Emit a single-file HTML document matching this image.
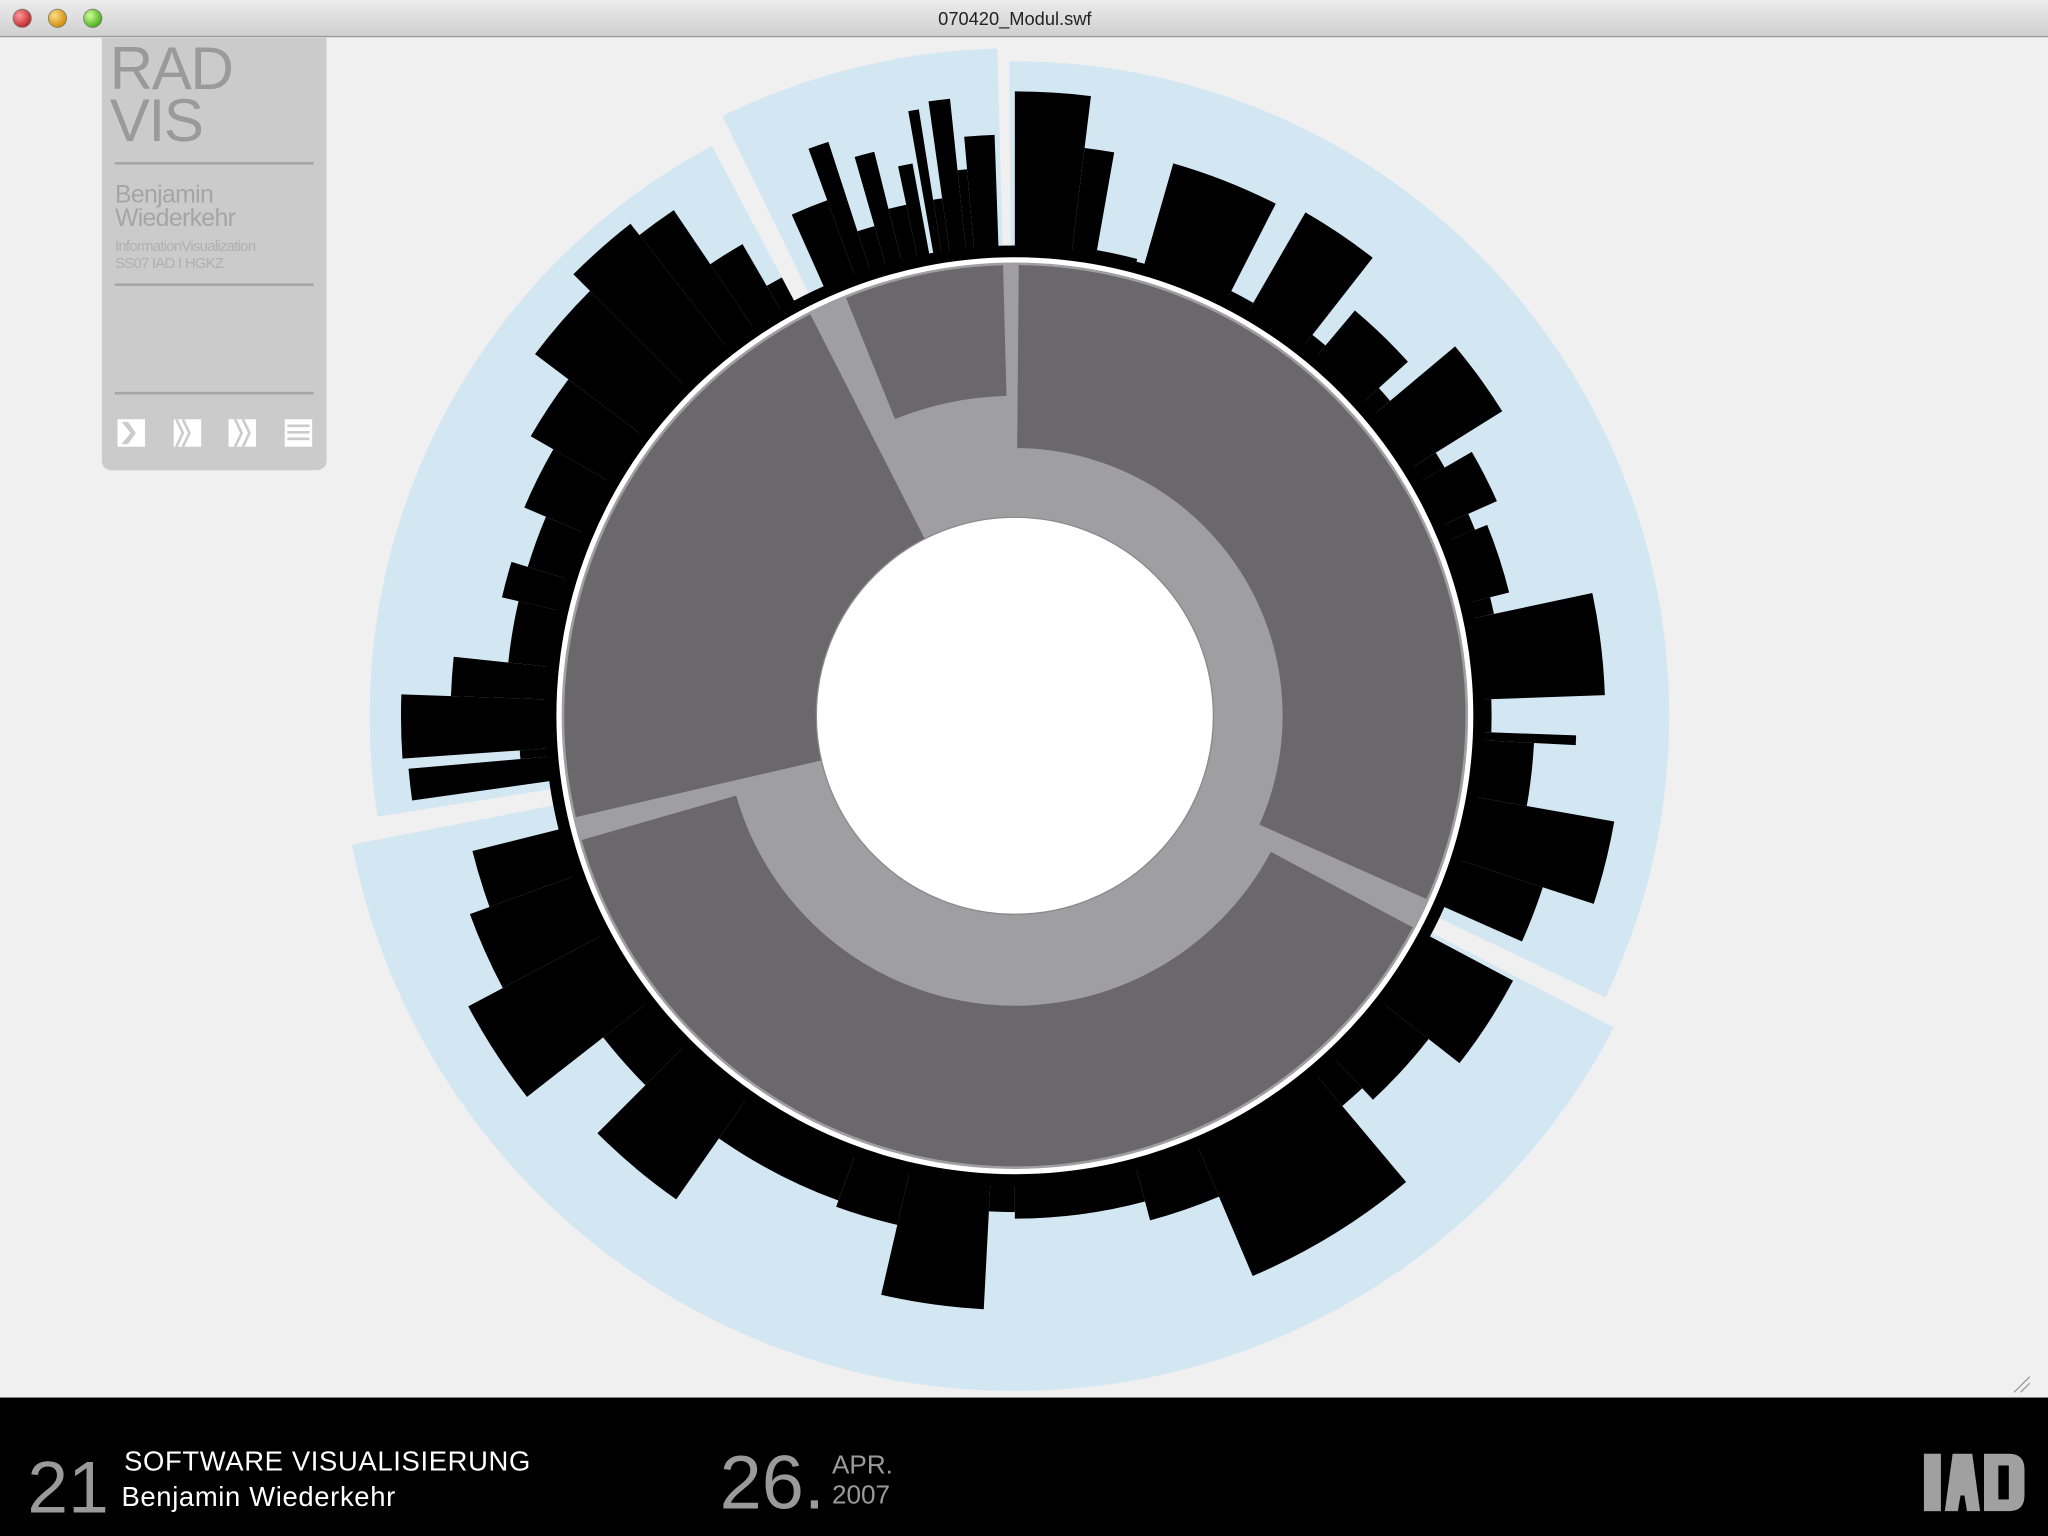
<!DOCTYPE html>
<html><head><meta charset="utf-8"><style>
html,body{margin:0;padding:0;background:#f0f0f0;overflow:hidden}
svg{display:block}
text{font-family:"Liberation Sans",sans-serif}
</style></head><body>
<svg id="s" width="2048" height="1536" viewBox="0 0 1568 1176" xmlns="http://www.w3.org/2000/svg">
<defs><linearGradient id="tb" x1="0" y1="0" x2="0" y2="1"><stop offset="0" stop-color="#ececec"/><stop offset="1" stop-color="#cfcfcf"/></linearGradient>
<radialGradient id="r1" cx="0.35" cy="0.35" r="0.7"><stop offset="0" stop-color="#f99"/><stop offset="1" stop-color="#b22"/></radialGradient>
<radialGradient id="r2" cx="0.35" cy="0.35" r="0.7"><stop offset="0" stop-color="#fd8"/><stop offset="1" stop-color="#c80"/></radialGradient>
<radialGradient id="r3" cx="0.35" cy="0.35" r="0.7"><stop offset="0" stop-color="#cf9"/><stop offset="1" stop-color="#4a1"/></radialGradient></defs>
<rect width="1568" height="1176" fill="#f0f0f0"/>
<g id="viz"></g>
<!-- title bar -->
<rect x="0" y="0" width="1568" height="28" fill="url(#tb)"/>
<line x1="0" y1="28" x2="1568" y2="28" stroke="#999"/>
<circle cx="17" cy="14" r="7" fill="url(#r1)" stroke="#777" stroke-width="0.6"/>
<circle cx="44" cy="14" r="7" fill="url(#r2)" stroke="#777" stroke-width="0.6"/>
<circle cx="71" cy="14" r="7" fill="url(#r3)" stroke="#777" stroke-width="0.6"/>
<text x="777" y="19" text-anchor="middle" font-size="14" fill="#222">070420_Modul.swf</text>
<!-- panel -->
<path d="M78 29 H250 V352 Q250 360 242 360 H86 Q78 360 78 352 Z" fill="#cbcbcb"/>
<text x="84" y="68" font-size="46" fill="#9a9a9a" letter-spacing="-1">RAD</text>
<text x="84" y="108" font-size="46" fill="#9a9a9a" letter-spacing="-1">VIS</text>
<line x1="88" y1="125" x2="240" y2="125" stroke="#a5a5a5" stroke-width="2"/>
<text x="88" y="155" font-size="19" fill="#a5a5a5" letter-spacing="-0.5">Benjamin</text>
<text x="88" y="173" font-size="19" fill="#a5a5a5" letter-spacing="-0.5">Wiederkehr</text>
<text x="88" y="192" font-size="11.5" fill="#b0b0b0" letter-spacing="-0.6">InformationVisualization</text>
<text x="88" y="205" font-size="11.5" fill="#b0b0b0" letter-spacing="-0.6">SS07 IAD I HGKZ</text>
<line x1="88" y1="218" x2="240" y2="218" stroke="#a5a5a5" stroke-width="2"/>
<line x1="88" y1="301" x2="240" y2="301" stroke="#a5a5a5" stroke-width="2"/>
<g fill="#fff">
<path d="M90 321 H111 V342 H90 Z" /><path d="M93 323 L100 331.5 L93 340 L98 340 L104 331.5 L98 323Z" fill="#cbcbcb"/>
<rect x="133" y="321" width="21" height="21"/><path d="M135 321 L140 331.5 L135 342 M140 321 L145 331.5 L140 342" stroke="#cbcbcb" stroke-width="2" fill="none"/>
<rect x="175" y="321" width="21" height="21"/><path d="M180 321 L185 331.5 L180 342 M186 321 L191 331.5 L186 342" stroke="#cbcbcb" stroke-width="2" fill="none"/>
<rect x="218" y="321" width="21" height="21"/><path d="M220 326 H237 M220 331 H237 M220 336 H237" stroke="#cbcbcb" stroke-width="2"/>
</g>
<path d="M1542 1066 L1554 1054 M1547 1066 L1554 1059" stroke="#999" stroke-width="1"/>
<!-- footer -->
<rect x="0" y="1070" width="1568" height="106" fill="#000"/>
<text x="21" y="1158" font-size="56" fill="#9a9a9a">21</text>
<text x="95" y="1126" font-size="21" fill="#fff" letter-spacing="0.5">SOFTWARE VISUALISIERUNG</text>
<text x="93" y="1153" font-size="21" fill="#fff" letter-spacing="0.5">Benjamin Wiederkehr</text>
<text x="551" y="1155" font-size="58" fill="#9a9a9a">26.</text>
<text x="637" y="1128" font-size="20" fill="#9a9a9a">APR.</text>
<text x="637" y="1151" font-size="20" fill="#9a9a9a">2007</text>
<g fill="#a0a0a0"><rect x="1473" y="1113" width="13" height="44"/>
<path d="M1489 1157 L1495 1113 H1510 L1516 1157 H1506 L1504 1145 H1501 L1499 1157Z"/>
<path d="M1519 1113 H1538 Q1550 1113 1550 1125 V1145 Q1550 1157 1538 1157 H1519Z"/>
<rect x="1530" y="1122" width="8" height="26" fill="#000"/></g>
</svg>
<script>
var cx=777,cy=548,g=document.getElementById('viz'),NS='http://www.w3.org/2000/svg';
function P(a,r){var t=(a-90)*Math.PI/180;return [cx+r*Math.cos(t),cy+r*Math.sin(t)];}
function sec(a0,a1,r0,r1,f){var p0=P(a0,r1),p1=P(a1,r1),p2=P(a1,r0),p3=P(a0,r0),l=(a1-a0)>180?1:0;
var d='M'+p0+' A'+r1+' '+r1+' 0 '+l+' 1 '+p1+' L'+p2+' A'+r0+' '+r0+' 0 '+l+' 0 '+p3+'Z';
var e=document.createElementNS(NS,'path');e.setAttribute('d',d);e.setAttribute('fill',f);g.appendChild(e);}
function circ(r,f,s,w){var e=document.createElementNS(NS,'circle');e.setAttribute('cx',cx);e.setAttribute('cy',cy);e.setAttribute('r',r);e.setAttribute('fill',f);if(s){e.setAttribute('stroke',s);e.setAttribute('stroke-width',w);}g.appendChild(e);}
var B='#d3e7f2';
sec(-0.5,115.5,300,501,B);sec(117.5,259,300,517,B);sec(261,332,300,494,B);sec(334,358.5,300,511,B);
var bars=[[0,7,478],[7,10,438],[10,15,362],[16,27,440],[27,30,365],[30,38,445],[38,40,370],[40,48,405],[48,50,375],[50,58,440],[58,60,380],[60,66,404],[66,68,380],[68,76,390],[76,78,375],[78,88,452],[88,92,365],[92,93,430],[93,100,398],[100,108,466],[108,114,425],
[118,128,432],[128,137,402],[137,140,390],[140,157,466],[157,165,400],[165,180,385],[180,183,380],[183,193,455],[193,200,400],[200,215,395],[215,225,452],[225,232,400],[232,242,474],[242,250,444],[250,256,428],
[262,265,466],[265,266,380],[266,272,470],[272,276,432],[276,283,390],[283,287,403],[287,293,390],[293,300,408],[300,307,428],[307,315,460],[315,322,478],[322,326,467],[326,330,417],[330,332,380],
[336,340,420],[340,342,462],[342,344,390],[344,346,445],[346,348,400],[348,349.5,430],[350,351,470],[351,352,400],[352,354,475],[354,355,420],[355,358,445]];
circ(360,'#000');
bars.forEach(function(b){sec(b[0],b[1],355,b[2],'#000');});
circ(351,'#fff');circ(347,'#9f9ea1');
sec(0.5,114,205,345,'#6a686b');sec(118,254,222,345,'#6a686b');sec(257,333,152,345,'#6a686b');sec(338,358.5,245,345,'#6a686b');
circ(152,'#fff','#8a8a8a',1);
circ(349,'none','#fff',1.5);
</script>
</body></html>
